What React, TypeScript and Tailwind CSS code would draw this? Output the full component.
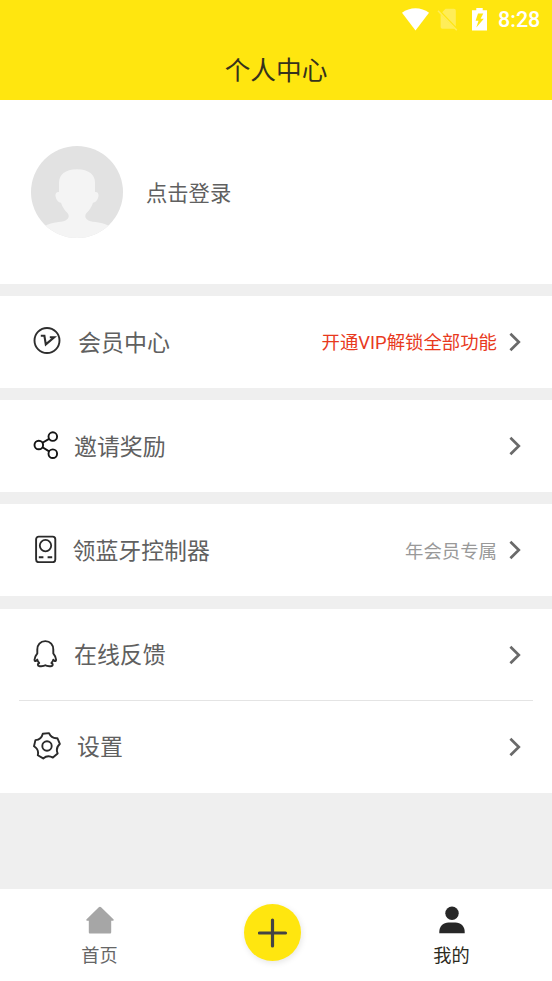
import * as React from "react";

type RowProps = {
  icon: React.ReactNode;
  label: string;
  labelClass: string;
  note?: React.ReactNode;
};

const vipIcon = (
  <svg className="w-7 h-7" viewBox="0 0 28 28" fill="none" stroke="#2e2e2e">
    <circle cx="14" cy="13.5" r="12.5" strokeWidth="1.9" />
    <path d="M7.8 8.8h3.600l1.400 8.600 8.400-7.200h-4.400" strokeWidth="2.1" />
  </svg>
);

const shareIcon = (
  <svg className="w-7 h-7" viewBox="0 0 28 28" fill="none" stroke="#151515" strokeWidth="1.9">
    <circle cx="5.8" cy="14" r="4.3" />
    <circle cx="19.8" cy="5.6" r="4.3" />
    <circle cx="19.8" cy="22.7" r="4.3" />
    <path d="M9.5 11.8l6.6-3.9M9.5 16.2l6.6 4.2" />
  </svg>
);

const controllerIcon = (
  <svg className="w-7 h-7" viewBox="0 0 28 28" fill="none" stroke="#2a2a2a">
    <rect x="3.1" y="1.6" width="19.2" height="25.6" rx="2.6" strokeWidth="1.9" />
    <circle cx="12.5" cy="10.6" r="5.7" strokeWidth="1.8" />
    <path d="M5.8 22.3h4.6M14.6 22.3h4.6" strokeWidth="1.9" />
  </svg>
);

const penguinIcon = (
  <svg className="w-7 h-7" viewBox="0 0 28 28" fill="none" stroke="#2a2a2a" strokeWidth="1.9" strokeLinejoin="round">
    <path d="M12.3 1.1C7.2 1.1 4.3 4.9 4.3 9.400v4C2.600 15.600 1.500 17.800 1.500 19.800c0 1.500 1 1.700 1.800.8l1-1c.3 1.400 1 2.500 1.900 3.400-2 .8-1.800 3 .4 3.200 2.100.2 4.300.1 5.700-.9 1.400 1 3.600 1.100 5.700.9 2.200-.2 2.400-2.400.4-3.200.9-.9 1.600-2 1.900-3.400l1 1c.8.9 1.800.7 1.800-.8 0-2-1.100-4.200-2.800-6.400v-4c0-4.500-2.900-8.300-8-8.300z" />
  </svg>
);

// five rounded lobes, tilted a little
const gearIcon = (
  <svg className="w-7 h-7" viewBox="0 0 28 28" fill="none" stroke="#2a2a2a" strokeWidth="1.9" strokeLinejoin="round">
    <path
      transform="rotate(-5 14 14)"
      d="M10.86 1.39H17.14Q19 7.12 25.02 7.11L26.97 13.09Q22.08 16.63 23.96 22.36L18.87 26.05Q14 22.5 9.13 26.05L4.04 22.36Q5.92 16.63 1.03 13.09L2.98 7.11Q9 7.12 10.86 1.39z"
    />
    <circle cx="14" cy="14" r="4.7" />
  </svg>
);

const Chevron = () => (
  <svg className="w-3 h-5 ml-3 shrink-0" viewBox="0 0 12 20" fill="none" stroke="#6a6a6a" strokeWidth="2.7">
    <path d="M1.4 1.7L9.8 10l-8.400 8.300" />
  </svg>
);

const Row = ({ icon, label, labelClass, note }: RowProps) => (
  <button className="w-full h-[92px] pl-[33px] pr-[31px] flex items-center bg-white text-left">
    <span className="mb-0.5 shrink-0">{icon}</span>
    <span className={labelClass}>{label}</span>
    <span className="ml-auto pt-0.5">{note}</span>
    <Chevron />
  </button>
);

const StatusBar = () => (
  <div className="h-[39px] pl-[402px] flex items-center text-white">
    <svg className="w-[27px] h-[23px]" viewBox="0 0 27 23" fill="currentColor">
      <path d="M0 4.7C7.6-1.3 19.4-1.3 27 4.7L13.5 22.5z" />
    </svg>
    <svg className="w-[21px] h-[23px] ml-2 opacity-30" viewBox="0 0 21 23" fill="currentColor">
      <path d="M8.5.8H17a1.8 1.8 0 011.8 1.8v16L5.2 4.2z" />
      <path d="M3.6 6.2L17.8 20.8H5.4a1.8 1.8 0 01-1.8-1.8z" />
      <path d="M1 2.7l18.8 19.6" stroke="currentColor" strokeWidth="1.5" />
    </svg>
    <svg className="w-[15px] h-[23px] ml-3.5" viewBox="0 0 15 23" fill="currentColor">
      <path fillRule="evenodd" d="M4.3 0h6.4v2.3H15v20.2H0V2.3h4.3zM6 5.5L3.600 12.800H6.500L4.300 19.600 11.800 10.800H8.600L11.300 5.500z" />
    </svg>
    <span className="ml-[11px] font-[Roboto] font-medium text-[21.5px] leading-none">8:28</span>
  </div>
);

const Profile = () => (
  <section className="h-[184px] pl-[31px] flex items-center bg-white">
    <svg className="w-[92px] h-[92px]" viewBox="0 0 92 92">
      <clipPath id="avatar">
        <circle cx="46" cy="46" r="46" />
      </clipPath>
      <g clipPath="url(#avatar)">
        <path d="M0 0h92v92H0z" fill="#e2e2e2" />
        <path
          d="M46 23.3C34 23.3 28 29 28 36.5V46C25.3 45.5 24.2 47.5 24.5 50C25 53.5 27 56.5 30 56.7C31.3 60.8 33.8 64.800 36.500 67C38.600 69.500 38 72.800 34.500 74.500C29.500 76.500 20 76 14 80V96H78V80C72 76 62.500 76.500 57.500 74.500C54 72.800 53.400 69.500 55.500 67C58.200 64.800 60.700 60.800 62 56.700C65 56.500 67 53.500 67.500 50C67.800 47.500 66.700 45.500 64 46V36.500C64 29 58 23.300 46 23.300z"
          fill="#f4f4f4"
        />
      </g>
    </svg>
    <span className="ml-[23px] pt-px text-[21.3px] text-[#606060]">点击登录</span>
  </section>
);

const TabBar = () => (
  <nav className="h-[92px] pl-[81px] flex bg-white text-[18.2px] leading-6">
    <a className="w-[37px] pt-[17px] flex flex-col items-center text-[#666]">
      <svg className="w-7 h-7" viewBox="0 0 28 28" fill="#a6a6a6">
        <path d="M12.8 1.2a1.7 1.7 0 012.3 0l12.3 12c.8.8.4 1.5-.6 1.5h-1.6v11.6c0 .8-.5 1.2-1.2 1.2H4c-.7 0-1.2-.4-1.2-1.2V14.7H1.2c-1 0-1.4-.7-.6-1.5z" />
      </svg>
      <span className="mt-2 whitespace-nowrap">首页</span>
    </a>
    <button className="w-[57px] h-[57px] mt-[15px] ml-[126px] rounded-full bg-[#ffe60f] shadow-[1px_2px_6px_rgba(0,0,0,0.1)] flex items-center justify-center">
      <svg className="w-[30px] h-[30px]" viewBox="0 0 30 30" stroke="#444" strokeWidth="3.2" strokeLinecap="round">
        <path d="M14.500 2v26M1.500 15h26" />
      </svg>
    </button>
    <a className="w-[37px] ml-[132px] pt-[17px] flex flex-col items-center text-[#2b2a1c]">
      <svg className="w-7 h-7" viewBox="0 0 28 28" fill="#272727">
        <circle cx="14" cy="7.2" r="6.7" />
        <path d="M1.3 27.3v-1.5c0-5.5 4-9.3 9.2-9.3h7c5.2 0 9.2 3.8 9.2 9.3v1.5z" />
      </svg>
      <span className="mt-2 whitespace-nowrap">我的</span>
    </a>
  </nav>
);

const App = () => {
  return (
    <div className="w-[552px] h-[981px] overflow-hidden flex flex-col bg-[#efefef] font-['Noto_Sans_CJK_SC',sans-serif]">
      <header className="h-[99.5px] shrink-0 bg-[#ffe60f]">
        <StatusBar />
        <h1 className="h-[59px] text-center text-[25.7px] leading-[59px] text-[#36321c]">个人中心</h1>
      </header>
      <Profile />
      <main className="mt-3 flex flex-col gap-3">
        <Row
          icon={vipIcon}
          label="会员中心"
          labelClass="ml-[17px] text-[23px] text-[#606060]"
          note={<span className="text-[18.4px] text-[#e8391d] font-[Roboto,'Noto_Sans_CJK_SC',sans-serif]">开通VIP解锁全部功能</span>}
        />
        <Row icon={shareIcon} label="邀请奖励" labelClass="ml-[13px] text-[22.9px] text-[#606060]" />
        <Row
          icon={controllerIcon}
          label="领蓝牙控制器"
          labelClass="ml-[11.5px] text-[22.9px] text-[#606060]"
          note={<span className="text-[18.4px] text-[#999]">年会员专属</span>}
        />
        <div className="mt-px bg-white">
          <Row icon={penguinIcon} label="在线反馈" labelClass="ml-[13px] pb-0.5 text-[22.9px] text-[#606060]" />
          <div className="mx-[19px] -mt-px h-px bg-[#e4e4e4]" />
          <Row icon={gearIcon} label="设置" labelClass="ml-4 pb-0.5 text-[22.9px] text-[#606060]" />
        </div>
      </main>
      <div className="mt-auto">
        <TabBar />
      </div>
    </div>
  );
};

export default App;
